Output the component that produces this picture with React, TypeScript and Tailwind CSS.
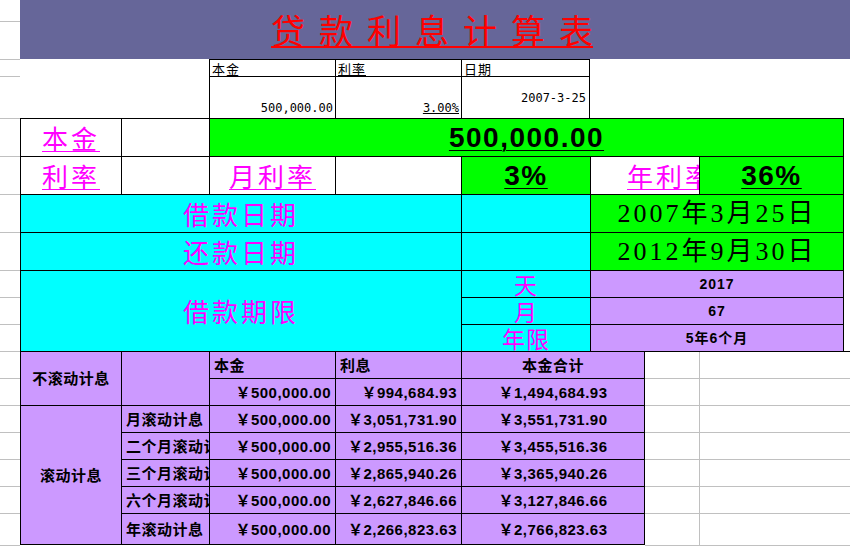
import { Fragment } from "react";

const gutterRows = [
  "h-[21px]",
  "h-[38px] border-t",
  "h-[17px] border-t",
  "h-[42px] border-t",
  "h-[38px] border-t",
  "h-[38px] border-t",
  "h-[38px] border-t",
  "h-[38px] border-t",
  "h-[27px] border-t",
  "h-[27px] border-t",
  "h-[27px] border-t",
  "h-[27px] border-t",
  "h-[27px] border-t",
  "h-[27px] border-t",
  "h-[27px] border-t",
  "h-[27px] border-t",
  "h-[27px] border-t",
  "h-[32px] border-t",
  "h-[1px] border-t",
];

const rolling = [
  { row: "row-start-14", label: "月滚动计息", interest: "￥3,051,731.90", total: "￥3,551,731.90", last: false },
  { row: "row-start-15", label: "二个月滚动计息", interest: "￥2,955,516.36", total: "￥3,455,516.36", last: false },
  { row: "row-start-16", label: "三个月滚动计息", interest: "￥2,865,940.26", total: "￥3,365,940.26", last: false },
  { row: "row-start-17", label: "六个月滚动计息", interest: "￥2,627,846.66", total: "￥3,127,846.66", last: false },
  { row: "row-start-18", label: "年滚动计息", interest: "￥2,266,823.63", total: "￥2,766,823.63", last: true },
];

// shared text styles
const label =
  "text-[#ff00ff] font-['Noto_Sans_CJK_SC',sans-serif] text-[26px] tracking-[3px] leading-none";
const bigNum =
  "font-['Liberation_Sans',sans-serif] font-bold text-[28px] tracking-[1.5px] leading-none underline decoration-1 underline-offset-[3px] text-black";
const dateText =
  "font-['Liberation_Serif','Noto_Sans_CJK_SC',serif] text-[26px] tracking-[3px] leading-none text-black";
const small =
  "font-['Liberation_Sans','Noto_Sans_CJK_SC',sans-serif] font-bold text-[14px] tracking-[1px] leading-none text-black";
const tbl =
  "font-['Liberation_Sans','Noto_Sans_CJK_SC',sans-serif] font-bold text-[15px] tracking-[0.5px] leading-none text-black";
const mono = "font-['DejaVu_Sans_Mono',monospace] text-[12px] leading-none text-black";
const term = "text-[#ff00ff] font-['Noto_Sans_CJK_SC',sans-serif] text-[23px] tracking-[1px] leading-none";
const cell = "flex items-center overflow-hidden whitespace-nowrap border-black";

export default function App() {
  return (
    <div className="w-[850px] h-[546px] bg-white overflow-hidden grid grid-cols-[20px_101px_88px_126px_126px_129px_55px_54px_145px_6px] grid-rows-[21px_38px_17px_42px_38px_38px_38px_38px_27px_27px_27px_27px_27px_27px_27px_27px_27px_32px_1px]">
      {/* row header gutter */}
      <div className="col-start-1 row-start-1 row-span-19 flex flex-col">
        {gutterRows.map((h, i) => (
          <div key={i} className={`${h} shrink-0 border-[#c0c0c0]`} />
        ))}
      </div>

      {/* title */}
      <div className="col-start-2 col-span-9 row-start-1 row-span-2 bg-[#666699] flex items-center justify-center">
        <span className="text-[#ff0000] font-['Noto_Sans_CJK_SC',serif] text-[34px] leading-none tracking-[14px] underline decoration-[1.5px] underline-offset-[2px] mr-[6px]">
          贷款利息计算<span className="tracking-normal">表</span>
        </span>
      </div>

      {/* small input table */}
      <div className={`${cell} col-start-4 row-start-3 border-l border-t pl-[2px]`}>
        <span className="font-['Noto_Sans_CJK_SC',sans-serif] text-[13px] tracking-[1px] leading-none">本金</span>
      </div>
      <div className={`${cell} col-start-5 row-start-3 border-l border-t pl-[2px]`}>
        <span className="font-['Noto_Sans_CJK_SC',sans-serif] text-[13px] tracking-[1px] leading-none underline">利率</span>
      </div>
      <div className={`${cell} col-start-6 row-start-3 border-l border-t border-r pl-[2px]`}>
        <span className="font-['Noto_Sans_CJK_SC',sans-serif] text-[13px] tracking-[1px] leading-none">日期</span>
      </div>
      <div className={`${cell} col-start-4 row-start-4 border-l border-t items-end justify-end pr-[2px] pb-[4px]`}>
        <span className={mono}>500,000.00</span>
      </div>
      <div className={`${cell} col-start-5 row-start-4 border-l border-t items-end justify-end pr-[2px] pb-[4px]`}>
        <span className={`${mono} underline`}>3.00%</span>
      </div>
      <div className={`${cell} col-start-6 row-start-4 border-l border-t border-r justify-end pr-[3px]`}>
        <span className={mono}>2007-3-25</span>
      </div>

      {/* 本金 row */}
      <div className={`${cell} col-start-2 row-start-5 border-l border-t justify-center`}>
        <span className={`${label} underline decoration-1 underline-offset-[2px]`}>本金</span>
      </div>
      <div className={`${cell} col-start-3 row-start-5 border-l border-t`} />
      <div className={`${cell} col-start-4 col-span-6 row-start-5 border-l border-t border-r bg-[#00ff00] justify-center`}>
        <span className={bigNum}>500,000.00</span>
      </div>

      {/* 利率 row */}
      <div className={`${cell} col-start-2 row-start-6 border-l border-t justify-center`}>
        <span className={`${label} underline decoration-1 underline-offset-[2px]`}>利率</span>
      </div>
      <div className={`${cell} col-start-3 row-start-6 border-l border-t`} />
      <div className={`${cell} col-start-4 row-start-6 border-l border-t justify-center`}>
        <span className={`${label} underline decoration-1 underline-offset-[2px]`}>月利率</span>
      </div>
      <div className={`${cell} col-start-5 row-start-6 border-l border-t`} />
      <div className={`${cell} col-start-6 row-start-6 border-l border-t bg-[#00ff00] justify-center`}>
        <span className={bigNum}>3%</span>
      </div>
      <div className={`${cell} col-start-7 col-span-2 row-start-6 border-l border-t pl-[36px]`}>
        <span className={`${label} underline decoration-1 underline-offset-[2px]`}>年利率</span>
      </div>
      <div className={`${cell} col-start-9 row-start-6 border-l border-t border-r bg-[#00ff00] justify-center`}>
        <span className={bigNum}>36%</span>
      </div>

      {/* dates */}
      <div className={`${cell} col-start-2 col-span-4 row-start-7 border-l border-t bg-[#00ffff] justify-center`}>
        <span className={label}>借款日期</span>
      </div>
      <div className={`${cell} col-start-6 row-start-7 border-l border-t bg-[#00ffff]`} />
      <div className={`${cell} col-start-7 col-span-3 row-start-7 border-l border-t border-r bg-[#00ff00] justify-center`}>
        <span className={dateText}>2007年3月25日</span>
      </div>
      <div className={`${cell} col-start-2 col-span-4 row-start-8 border-l border-t bg-[#00ffff] justify-center`}>
        <span className={label}>还款日期</span>
      </div>
      <div className={`${cell} col-start-6 row-start-8 border-l border-t bg-[#00ffff]`} />
      <div className={`${cell} col-start-7 col-span-3 row-start-8 border-l border-t border-r bg-[#00ff00] justify-center`}>
        <span className={dateText}>2012年9月30日</span>
      </div>

      {/* term */}
      <div className={`${cell} col-start-2 col-span-4 row-start-9 row-span-3 border-l border-t bg-[#00ffff] justify-center`}>
        <span className={label}>借款期限</span>
      </div>
      <div className={`${cell} col-start-6 row-start-9 border-l border-t bg-[#00ffff] justify-center`}>
        <span className={term}>天</span>
      </div>
      <div className={`${cell} col-start-7 col-span-3 row-start-9 border-l border-t border-r bg-[#cc99ff] justify-center`}>
        <span className={small}>2017</span>
      </div>
      <div className={`${cell} col-start-6 row-start-10 border-l border-t bg-[#00ffff] justify-center`}>
        <span className={term}>月</span>
      </div>
      <div className={`${cell} col-start-7 col-span-3 row-start-10 border-l border-t border-r bg-[#cc99ff] justify-center`}>
        <span className={small}>67</span>
      </div>
      <div className={`${cell} col-start-6 row-start-11 border-l border-t bg-[#00ffff] justify-center`}>
        <span className={term}>年限</span>
      </div>
      <div className={`${cell} col-start-7 col-span-3 row-start-11 border-l border-t border-r bg-[#cc99ff] justify-center`}>
        <span className={small}>5年6个月</span>
      </div>

      {/* lower table: simple interest */}
      <div className={`${cell} col-start-2 row-start-12 row-span-2 border-l border-t bg-[#cc99ff] justify-center`}>
        <span className={tbl}>不滚动计息</span>
      </div>
      <div className={`${cell} col-start-3 row-start-12 row-span-2 border-l border-t bg-[#cc99ff]`} />
      <div className={`${cell} col-start-4 row-start-12 border-l border-t bg-[#cc99ff] pl-[4px]`}>
        <span className={tbl}>本金</span>
      </div>
      <div className={`${cell} col-start-5 row-start-12 border-l border-t bg-[#cc99ff] pl-[4px]`}>
        <span className={tbl}>利息</span>
      </div>
      <div className={`${cell} col-start-6 col-span-2 row-start-12 border-l border-t border-r bg-[#cc99ff] justify-center`}>
        <span className={tbl}>本金合计</span>
      </div>
      <div className={`${cell} col-start-4 row-start-13 border-l border-t bg-[#cc99ff] justify-end pr-[4px]`}>
        <span className={tbl}>￥500,000.00</span>
      </div>
      <div className={`${cell} col-start-5 row-start-13 border-l border-t bg-[#cc99ff] justify-end pr-[4px]`}>
        <span className={tbl}>￥994,684.93</span>
      </div>
      <div className={`${cell} col-start-6 col-span-2 row-start-13 border-l border-t border-r bg-[#cc99ff] justify-center`}>
        <span className={tbl}>￥1,494,684.93</span>
      </div>

      {/* lower table: compound interest */}
      <div className={`${cell} col-start-2 row-start-14 row-span-5 border-l border-t border-b bg-[#cc99ff] justify-center`}>
        <span className={tbl}>滚动计息</span>
      </div>
      {rolling.map((r) => (
        <Fragment key={r.label}>
          <div className={`${cell} col-start-3 ${r.row} border-l border-t ${r.last ? "border-b" : ""} bg-[#cc99ff] pl-[4px]`}>
            <span className={tbl}>{r.label}</span>
          </div>
          <div className={`${cell} col-start-4 ${r.row} border-l border-t ${r.last ? "border-b" : ""} bg-[#cc99ff] justify-end pr-[4px]`}>
            <span className={tbl}>￥500,000.00</span>
          </div>
          <div className={`${cell} col-start-5 ${r.row} border-l border-t ${r.last ? "border-b" : ""} bg-[#cc99ff] justify-end pr-[4px]`}>
            <span className={tbl}>{r.interest}</span>
          </div>
          <div className={`${cell} col-start-6 col-span-2 ${r.row} border-l border-t border-r ${r.last ? "border-b" : ""} bg-[#cc99ff] justify-center`}>
            <span className={tbl}>{r.total}</span>
          </div>
        </Fragment>
      ))}

      {/* empty sheet cells on the right */}
      <div className="col-start-8 col-span-3 row-start-12 row-span-8 border-t border-black grid grid-cols-[54px_151px] grid-rows-[26px_27px_27px_27px_27px_27px_32px_1px]">
        {Array.from({ length: 8 }).map((_, i) => (
          <Fragment key={i}>
            <div className={i === 0 ? "" : "border-t border-[#c0c0c0]"} />
            <div className={i === 0 ? "border-l border-[#c0c0c0]" : "border-t border-l border-[#c0c0c0]"} />
          </Fragment>
        ))}
      </div>
    </div>
  );
}
